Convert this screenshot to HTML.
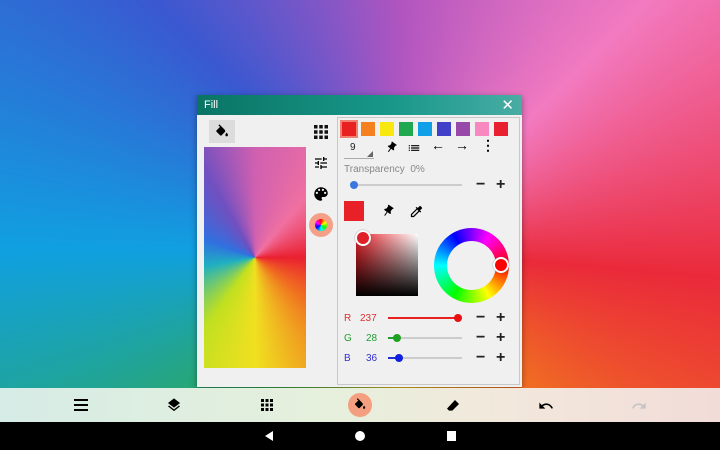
<!DOCTYPE html><html><head><style>
*{margin:0;padding:0;box-sizing:border-box}
body{width:720px;height:450px;overflow:hidden;position:relative;font-family:"Liberation Sans",sans-serif;
background:conic-gradient(from 0deg at 400px 250px,#b055c0,#f27ac0 45deg,#ea2a3a 95deg,#f06a24 135deg,#e8c020 180deg,#30a850 225deg,#10a0e0 270deg,#3a58d0 315deg,#b055c0 360deg)}
.abs{position:absolute}
#dlg{left:197px;top:95px;width:325px;height:292px;background:#f0f0f0;box-shadow:0 2px 6px rgba(0,0,0,.4)}
#tb{left:0;top:0;width:325px;height:20px;background:linear-gradient(90deg,#0a7464,#18988a 60%,#48aca4);color:#fff;font-size:11px;padding:4px 7px}
#prev{left:7px;top:52px;width:102px;height:221px;background:conic-gradient(from 0deg at 50% 50%,#d060b0,#f070a0 40deg,#ea2030 90deg,#f07020 130deg,#f0e020 180deg,#c0e020 215deg,#20b0c0 260deg,#3070e0 290deg,#7050c0 330deg,#d060b0 360deg)}
#rp{left:140px;top:22px;width:183px;height:268px;border:1px solid #c8c8c8}
.sw{position:absolute;top:4px;width:14px;height:14px}
.t{position:absolute;font-size:10px}
.pm{position:absolute;font-size:16px;font-weight:bold;color:#222;line-height:16px}
.ic{position:absolute}
#bar{left:0;top:388px;width:720px;height:34px;background:linear-gradient(90deg,#d6ece6,#e6f0dc 45%,#f2e8dc 70%,#f2dcd8)}
#nav{left:0;top:422px;width:720px;height:28px;background:#000}
.sl{position:absolute;height:2px;background:#ccc}
.knob{position:absolute;width:8px;height:8px;border-radius:50%}
</style></head><body>
<div id="dlg" class="abs">
<div id="tb" class="abs">Fill<span style="position:absolute;right:8px;top:1px;font-size:15px">✕</span></div>
<div class="abs" style="left:12px;top:25px;width:26px;height:23px;background:#dcdcdc"></div>
<svg class="ic" style="left:17px;top:29px" width="16" height="16" viewBox="0 0 24 24"><path d="M16.5 9L8 0.5 6.6 2l2.4 2.4L3.8 9.5c-.6.6-.6 1.5 0 2.1l5.5 5.5c.3.3.7.4 1 .4s.8-.1 1-.4l5.2-5.2c.6-.5.6-1.5 0-2zM19 13s-2 2.2-2 3.5c0 1.1.9 2 2 2s2-.9 2-2c0-1.3-2-3.5-2-3.5z"/></svg>
<div id="prev" class="abs"></div>
<svg class="ic" style="left:117px;top:30px" width="14" height="14" viewBox="0 0 12 12"><g fill="#111"><rect x="0" y="0" width="3" height="3"/><rect x="4.5" y="0" width="3" height="3"/><rect x="9" y="0" width="3" height="3"/><rect x="0" y="4.5" width="3" height="3"/><rect x="4.5" y="4.5" width="3" height="3"/><rect x="9" y="4.5" width="3" height="3"/><rect x="0" y="9" width="3" height="3"/><rect x="4.5" y="9" width="3" height="3"/><rect x="9" y="9" width="3" height="3"/></g></svg>
<svg class="ic" style="left:116px;top:60px" width="16" height="16" viewBox="0 0 24 24"><path d="M3 17v2h6v-2H3zM3 5v2h10V5H3zm10 16v-2h8v-2h-8v-2h-2v6h2zM7 9v2H3v2h4v2h2V9H7zm14 4v-2H11v2h10zm-6-4h2V7h4V5h-4V3h-2v6z"/></svg>
<svg class="ic" style="left:115px;top:90px" width="18" height="18" viewBox="0 0 24 24"><path d="M12 3a9 9 0 000 18c.8 0 1.5-.7 1.5-1.5 0-.4-.1-.7-.4-1-.2-.3-.4-.6-.4-1 0-.8.7-1.5 1.5-1.5H16c2.8 0 5-2.2 5-5 0-4.4-4-8-9-8zm-5.5 9a1.5 1.5 0 110-3 1.5 1.5 0 010 3zm3-4a1.5 1.5 0 110-3 1.5 1.5 0 010 3zm5 0a1.5 1.5 0 110-3 1.5 1.5 0 010 3zm3 4a1.5 1.5 0 110-3 1.5 1.5 0 010 3z"/></svg>
<div class="abs" style="left:112px;top:118px;width:24px;height:24px;border-radius:50%;background:#f4a088"></div>
<div class="abs" style="left:118px;top:124px;width:12px;height:12px;border-radius:50%;background:conic-gradient(#f00,#ff0,#0f0,#0ff,#00f,#f0f,#f00)"></div>
<div id="rp" class="abs">
<div class="sw" style="left:4px;background:#e82020;outline:2px solid #f08070"></div>
<div class="sw" style="left:23px;background:#f58020"></div>
<div class="sw" style="left:42px;background:#f8e810"></div>
<div class="sw" style="left:61px;background:#20a850"></div>
<div class="sw" style="left:80px;background:#10a0e8"></div>
<div class="sw" style="left:99px;background:#4040c8"></div>
<div class="sw" style="left:118px;background:#9848a8"></div>
<div class="sw" style="left:137px;background:#f888c0"></div>
<div class="sw" style="left:156px;background:#e82030"></div>
<div class="t" style="left:12px;top:24px;color:#222">9</div>
<div class="abs" style="left:6px;top:40px;width:30px;height:1px;background:#aaa"></div>
<div class="abs" style="left:29px;top:33px;border-left:6px solid transparent;border-bottom:6px solid #666"></div>
<svg class="ic" style="left:46px;top:23px" width="14" height="14" viewBox="0 0 24 24"><path d="M16 9V4h1V2H7v2h1v5l-2 2v2h5.2v7h1.6v-7H18v-2l-2-2z" transform="rotate(35 12 12)"/></svg>
<svg class="ic" style="left:69px;top:23px" width="14" height="14" viewBox="0 0 24 24"><path d="M3 13h2v-2H3v2zm0 4h2v-2H3v2zm0-8h2V7H3v2zm4 4h14v-2H7v2zm0 4h14v-2H7v2zM7 7v2h14V7H7z"/></svg>
<div class="t" style="left:93px;top:19px;font-size:14px">←</div>
<div class="t" style="left:117px;top:19px;font-size:14px">→</div>
<div class="t" style="left:143px;top:19px;font-size:14px;font-weight:bold">⋮</div>
<div class="t" style="left:6px;top:46px;color:#888">Transparency&nbsp; 0%</div>
<div class="sl" style="left:14px;top:66px;width:110px"></div>
<div class="knob" style="left:12px;top:63px;background:#3a78e0"></div>
<div class="pm" style="left:138px;top:59px">−</div>
<div class="pm" style="left:158px;top:59px">+</div>
<div class="abs" style="left:6px;top:83px;width:20px;height:20px;background:#e82028"></div>
<svg class="ic" style="left:42px;top:86px" width="15" height="15" viewBox="0 0 24 24"><path d="M16 9V4h1V2H7v2h1v5l-2 2v2h5.2v7h1.6v-7H18v-2l-2-2z" transform="rotate(35 12 12)"/></svg>
<svg class="ic" style="left:71px;top:86px" width="15" height="15" viewBox="0 0 24 24"><path d="M20.7 5.6l-2.3-2.3a1 1 0 00-1.4 0l-3.1 3.1-1.9-1.9-1.4 1.4 1.4 1.4L3 16.2V21h4.8l8.9-8.9 1.4 1.4 1.4-1.4-1.9-1.9 3.1-3.1a1 1 0 000-1.4zM7 19H5v-2l8.1-8.1 2 2L7 19z"/></svg>
<div class="abs" style="left:18px;top:116px;width:62px;height:62px;background:linear-gradient(to bottom,rgba(0,0,0,0),#000),linear-gradient(to right,#fff,#e82028);transform:scaleX(-1)"></div>
<div class="abs" style="left:17px;top:112px;width:16px;height:16px;border-radius:50%;background:#e02028;border:2px solid #fff;box-shadow:0 0 1px #555"></div>
<div class="abs" style="left:96px;top:110px;width:75px;height:75px;border-radius:50%;background:conic-gradient(from 90deg,#f00,#f0f 60deg,#00f 120deg,#0ff 180deg,#0f0 240deg,#ff0 300deg,#f00);transform:scaleY(-1)"></div>
<div class="abs" style="left:109px;top:123px;width:49px;height:49px;border-radius:50%;background:#f0f0f0"></div>
<div class="abs" style="left:155px;top:139px;width:16px;height:16px;border-radius:50%;background:#f00;border:2px solid #fff;box-shadow:0 0 1px #555"></div>
<div class="t" style="left:6px;top:195px;color:#e03030">R</div><div class="t" style="left:22px;top:195px;color:#e03030">237</div>
<div class="sl" style="left:50px;top:199px;width:74px"></div><div class="sl" style="left:50px;top:199px;width:68px;background:#e82020"></div>
<div class="knob" style="left:116px;top:196px;background:#e81010"></div>
<div class="pm" style="left:138px;top:192px">−</div><div class="pm" style="left:158px;top:192px">+</div>
<div class="t" style="left:6px;top:215px;color:#20a030">G</div><div class="t" style="left:28px;top:215px;color:#20a030">28</div>
<div class="sl" style="left:50px;top:219px;width:74px"></div><div class="sl" style="left:50px;top:219px;width:8px;background:#20a030"></div>
<div class="knob" style="left:55px;top:216px;background:#20a020"></div>
<div class="pm" style="left:138px;top:212px">−</div><div class="pm" style="left:158px;top:212px">+</div>
<div class="t" style="left:6px;top:235px;color:#3030d0">B</div><div class="t" style="left:28px;top:235px;color:#3030d0">36</div>
<div class="sl" style="left:50px;top:239px;width:74px"></div><div class="sl" style="left:50px;top:239px;width:10px;background:#2030d0"></div>
<div class="knob" style="left:57px;top:236px;background:#1020e0"></div>
<div class="pm" style="left:138px;top:232px">−</div><div class="pm" style="left:158px;top:232px">+</div>
</div>
</div>
<div id="bar" class="abs">
<svg class="ic" style="left:74px;top:11px" width="14" height="12" viewBox="0 0 14 12"><path d="M0 0h14v2H0zM0 5h14v2H0zM0 10h14v2H0z"/></svg>
<svg class="ic" style="left:166px;top:9px" width="16" height="16" viewBox="0 0 24 24"><path d="M12 16l7.4-5.7L21 9l-9-7-9 7 1.6 1.3L12 16zm0 2.5l-7.4-5.7L3 14.1l9 7 9-7-1.6-1.3-7.4 5.7z"/></svg>
<svg class="ic" style="left:261px;top:11px" width="12" height="12" viewBox="0 0 12 12"><g><rect width="3" height="3"/><rect x="4.5" width="3" height="3"/><rect x="9" width="3" height="3"/><rect y="4.5" width="3" height="3"/><rect x="4.5" y="4.5" width="3" height="3"/><rect x="9" y="4.5" width="3" height="3"/><rect y="9" width="3" height="3"/><rect x="4.5" y="9" width="3" height="3"/><rect x="9" y="9" width="3" height="3"/></g></svg>
<div class="abs" style="left:348px;top:5px;width:24px;height:24px;border-radius:50%;background:#f4a080"></div>
<svg class="ic" style="left:353px;top:10px" width="14" height="14" viewBox="0 0 24 24"><path d="M16.5 9L8 0.5 6.6 2l2.4 2.4L3.8 9.5c-.6.6-.6 1.5 0 2.1l5.5 5.5c.3.3.7.4 1 .4s.8-.1 1-.4l5.2-5.2c.6-.5.6-1.5 0-2zM19 13s-2 2.2-2 3.5c0 1.1.9 2 2 2s2-.9 2-2c0-1.3-2-3.5-2-3.5z"/></svg>
<svg class="ic" style="left:445px;top:10px" width="16" height="16" viewBox="0 0 24 24"><path d="M15 3l6 6-10 10H6L3 16z"/></svg>
<svg class="ic" style="left:538px;top:10px" width="16" height="16" viewBox="0 0 24 24"><path d="M12.5 8c-2.6 0-5 1-6.9 2.6L2 7v9h9l-3.6-3.6c1.4-1.2 3.2-1.9 5.1-1.9 3.5 0 6.5 2.3 7.6 5.5l2.4-.8C21 11.5 17.1 8 12.5 8z"/></svg>
<svg class="ic" style="left:631px;top:10px" width="16" height="16" viewBox="0 0 24 24" fill="#c4c4c4"><path d="M11.5 8c2.6 0 5 1 6.9 2.6L22 7v9h-9l3.6-3.6c-1.4-1.2-3.2-1.9-5.1-1.9-3.5 0-6.5 2.3-7.6 5.5L1.5 15.2C3 11.5 6.9 8 11.5 8z"/></svg>
</div>
<div id="nav" class="abs">
<div class="abs" style="left:265px;top:9px;border-right:8px solid #fff;border-top:5px solid transparent;border-bottom:5px solid transparent"></div>
<div class="abs" style="left:355px;top:9px;width:10px;height:10px;border-radius:50%;background:#fff"></div>
<div class="abs" style="left:447px;top:9px;width:9px;height:10px;background:#fff"></div>
</div>
</body></html>
